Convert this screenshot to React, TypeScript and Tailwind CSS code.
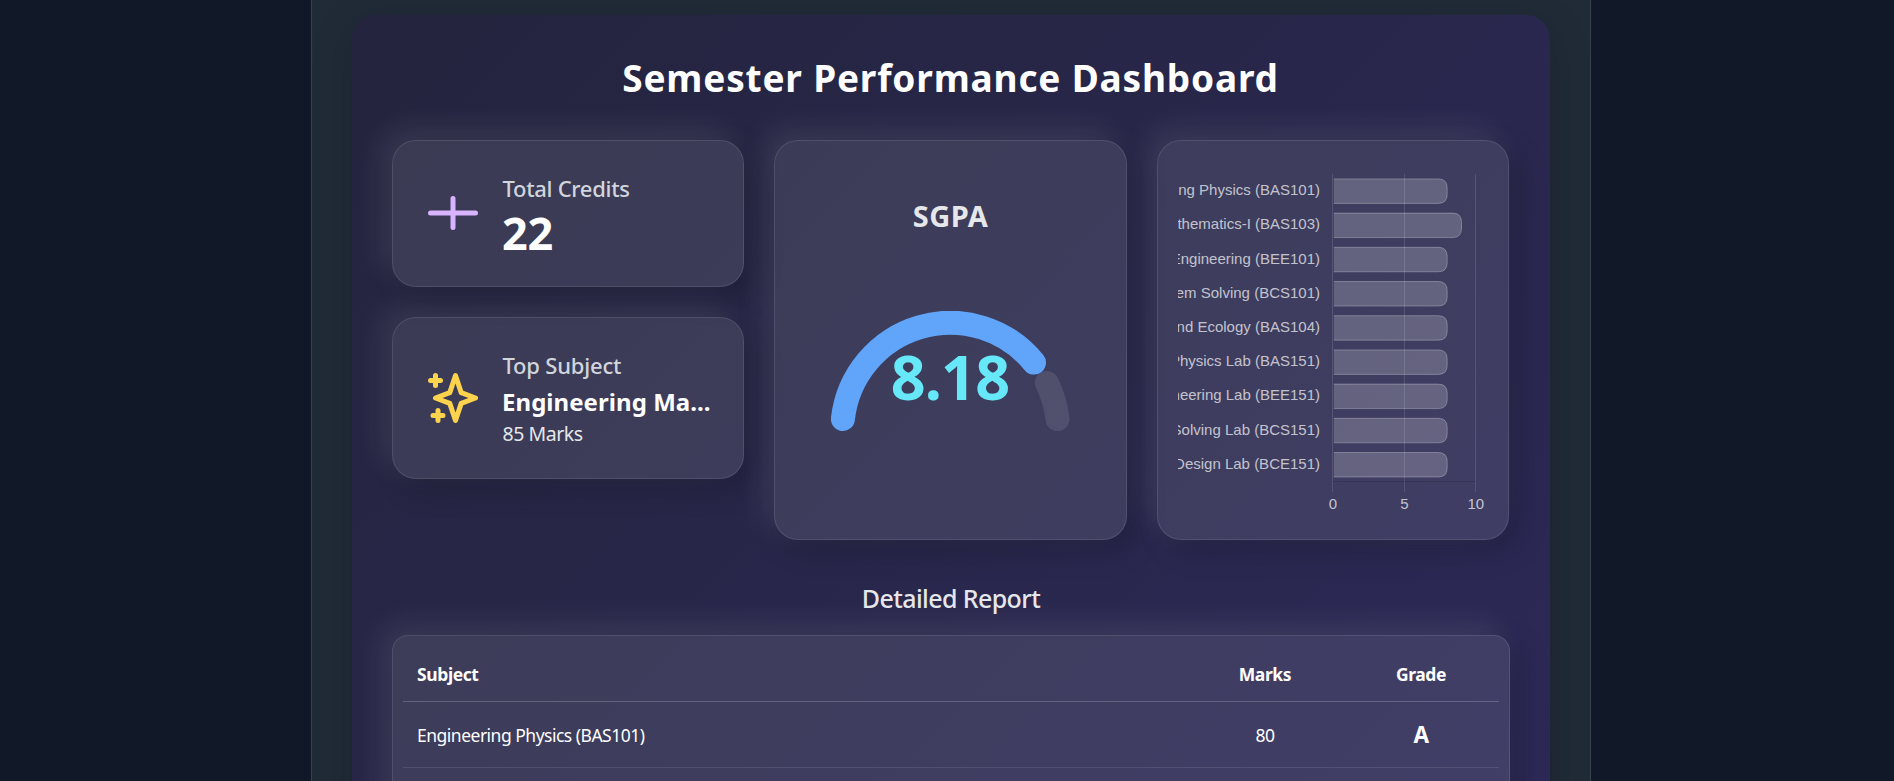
import type { ReactNode } from "react";

const subjects = [
  { label: "Engineering Physics (BAS101)", points: 8 },
  { label: "Engineering Mathematics-I (BAS103)", points: 9 },
  { label: "Fundamentals of Electrical Engineering (BEE101)", points: 8 },
  { label: "Programming for Problem Solving (BCS101)", points: 8 },
  { label: "Environment and Ecology (BAS104)", points: 8 },
  { label: "Engineering Physics Lab (BAS151)", points: 8 },
  { label: "Basic Electrical Engineering Lab (BEE151)", points: 8 },
  { label: "Programming for Problem Solving Lab (BCS151)", points: 8 },
  { label: "Engineering Graphics & Design Lab (BCE151)", points: 8 },
];

const rows = [{ subject: "Engineering Physics (BAS101)", marks: "80", grade: "A" }];

function Card({ className, children }: { className: string; children: ReactNode }) {
  return (
    <div
      className={`border border-white/10 bg-white/10 shadow-[10px_10px_30px_rgba(0,0,0,0.2),-10px_-10px_30px_rgba(255,255,255,0.1)] ${className}`}
    >
      {children}
    </div>
  );
}

function Gauge() {
  return (
    <svg width="240" height="122" viewBox="0 0 240 122" fill="none" strokeWidth="24" strokeLinecap="round">
      <path d="M215.9 72 A108 108 0 0 1 226.5 108" className="stroke-white/10" />
      <path d="M11.9 108 A108 108 0 0 1 203 51.6" className="stroke-[#60a5fa]" />
    </svg>
  );
}

function GradeChart() {
  const x0 = 154.8;
  const unit = 14.3;
  const pitch = 34.2;
  return (
    <svg width="310" height="358" viewBox="0 0 310 358" fontFamily="'Liberation Sans', Arial, sans-serif" fontSize="15">
      {[0, 5, 10].map((tick) => (
        <g key={tick}>
          <rect x={Math.round(x0 + tick * unit - 0.5)} y="13" width="1" height="318" fill="#fff" fillOpacity="0.12" />
          <text x={x0 + tick * unit} y="347.5" textAnchor="middle" fill="#fff" fillOpacity="0.7">
            {tick}
          </text>
        </g>
      ))}
      <rect x="155" y="320" width="143" height="1" fill="#000" fillOpacity="0.12" />
      {subjects.map((s, i) => {
        const top = 17.9 + i * pitch;
        const right = x0 + s.points * unit;
        return (
          <g key={s.label}>
            <text x="142" y={34.1 + i * pitch} textAnchor="end" fill="#fff" fillOpacity="0.7">
              {s.label}
            </text>
            <path
              d={`M${x0 + 1} ${top}H${right - 9}q9 0 9 9v6.5q0 9 -9 9H${x0 + 1}z`}
              fill="#fff"
              fillOpacity="0.2"
            />
            <path
              d={`M${x0 + 1} ${top}H${right - 9}q9 0 9 9v6.5q0 9 -9 9H${x0 + 1}`}
              fill="none"
              stroke="#fff"
              strokeOpacity="0.27"
            />
          </g>
        );
      })}
    </svg>
  );
}

export default function App() {
  return (
    <div className="flex h-[781px] justify-center overflow-hidden bg-[#111827] pl-[8px] font-['Noto_Sans','Open_Sans',sans-serif] text-white">
      <div className="h-[2000px] w-[1280px] shrink-0 border-x border-white/10 bg-[#212b38] px-10 pt-[15px]">
        <div className="h-[1700px] rounded-[24px] bg-linear-135 from-[#24243e] to-[#302b63] px-10 shadow-[0_10px_40px_rgba(0,0,0,0.2)]">
          <h1 className="pt-[37px] pr-[1px] text-center text-[37px] leading-[52px] font-bold tracking-[0.82px] whitespace-nowrap">
            Semester Performance Dashboard
          </h1>

          <div className="mt-[36px] grid grid-cols-[352px_353px_352px] gap-[30px]">
            <div className="flex flex-col gap-[30px]">
              <Card className="flex h-[147px] items-center gap-5 rounded-[24px] pl-[30px]">
                <svg width="60" height="60" viewBox="0 0 24 24" fill="none" strokeWidth="2" strokeLinecap="round" className="mb-[2px] shrink-0 stroke-[#d8b4fe]">
                  <path d="M3 12h18M12 6.2v11.6" />
                </svg>
                <div className="h-full pt-[32px]">
                  <div className="-ml-[0.5px] text-[22px] leading-[30px] font-medium tracking-[-0.3px] text-gray-300">Total Credits</div>
                  <div className="mt-[3px] -ml-[1px] text-[45px] leading-[54px] font-bold tracking-[-0.2px]">22</div>
                </div>
              </Card>
              <Card className="flex h-[162px] items-center gap-5 rounded-[24px] pl-[30px]">
                <svg width="60" height="60" viewBox="0 0 24 24" fill="none" strokeWidth="2" strokeLinecap="round" strokeLinejoin="round" className="shrink-0 stroke-[#fcd34d]">
                  <path d="M5 3v4M3 5h4M6 17v4m-2-2h4m5-16l2.286 6.857L21 12l-5.714 2.143L13 21l-2.286-6.857L5 12l5.714-2.143L13 3z" />
                </svg>
                <div className="h-full pt-[32px]">
                  <div className="-ml-[0.5px] text-[22px] leading-[30px] font-medium tracking-[-0.2px] text-gray-300">Top Subject</div>
                  <div className="mt-[5px] -ml-[1px] text-[24px] leading-[34px] font-bold tracking-[0.05px] whitespace-nowrap">Engineering Ma...</div>
                  <div className="mt-[1px] -ml-[0.5px] text-[19.5px] leading-[28px] tracking-[-0.45px] text-gray-200">85 Marks</div>
                </div>
              </Card>
            </div>

            <Card className="flex h-[400px] flex-col items-center rounded-[24px]">
              <div className="mt-[55px] text-[29px] leading-[40px] font-bold tracking-[0.5px] text-gray-200">SGPA</div>
              <div className="mt-[75px] flex h-[122px] flex-col items-center">
                <Gauge />
                <div className="-mt-[92px] pr-[1px] text-[61px] leading-[72px] font-bold tracking-[-0.8px] text-[#67e8f9]">8.18</div>
              </div>
            </Card>

            <Card className="h-[400px] rounded-[24px] p-5">
              <GradeChart />
            </Card>
          </div>

          <h2 className="mt-[41px] text-center text-[25px] leading-[34px] font-medium tracking-[-0.6px] text-gray-200">Detailed Report</h2>

          <Card className="mt-[20px] h-[900px] rounded-[16px] px-[10px] pt-[10px] text-[17.5px]">
            <div className="grid h-[56px] grid-cols-[1fr_156px_156px] items-center border-b border-white/20 pt-[2px] font-bold tracking-[-0.4px]">
              <div className="pl-[14px]">Subject</div>
              <div className="text-center">Marks</div>
              <div className="text-center">Grade</div>
            </div>
            {rows.map((r) => (
              <div key={r.subject} className="grid h-[66px] grid-cols-[1fr_156px_156px] items-center border-b border-white/10 pt-[2px] tracking-[-0.5px]">
                <div className="pl-[14px]">{r.subject}</div>
                <div className="text-center">{r.marks}</div>
                <div className="pb-[2px] text-center text-[22.5px] leading-[30px] font-bold">{r.grade}</div>
              </div>
            ))}
          </Card>
        </div>
      </div>
    </div>
  );
}
